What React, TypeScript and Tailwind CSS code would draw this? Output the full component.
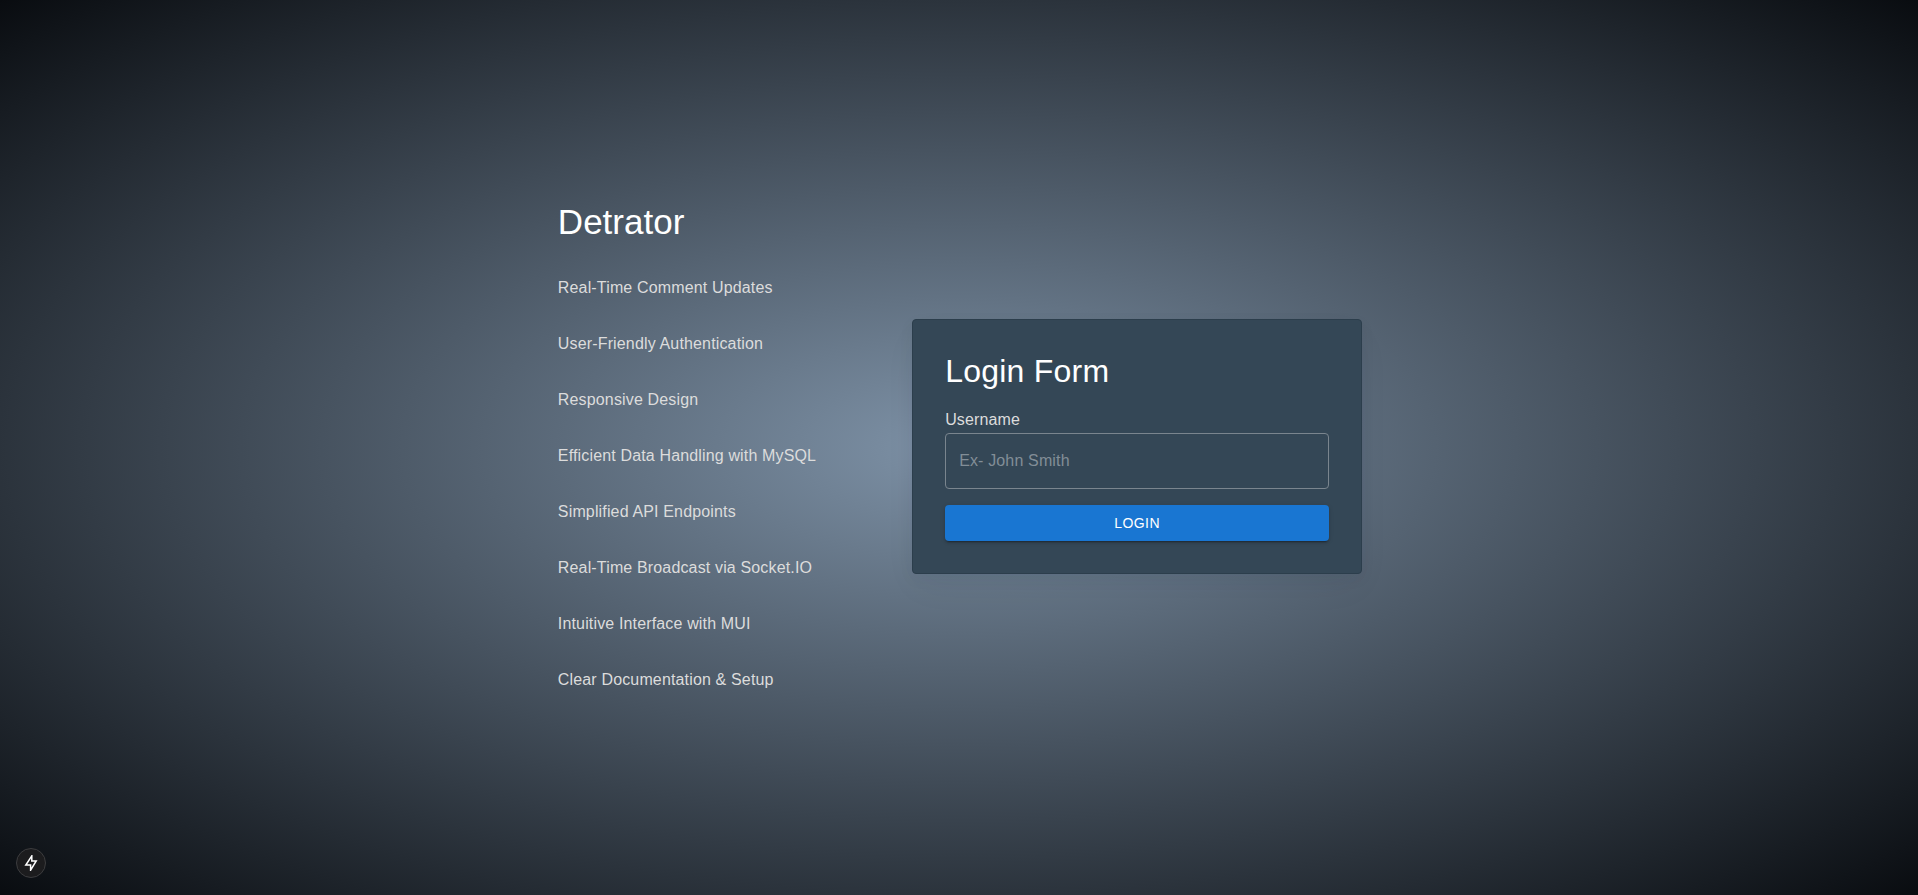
const features = [
  "Real-Time Comment Updates",
  "User-Friendly Authentication",
  "Responsive Design",
  "Efficient Data Handling with MySQL",
  "Simplified API Endpoints",
  "Real-Time Broadcast via Socket.IO",
  "Intuitive Interface with MUI",
  "Clear Documentation & Setup",
];

function FeatureList() {
  return (
    <section className="flex flex-col gap-8">
      <h1 className="mb-0.5 text-[35px] leading-10 text-white">Detrator</h1>
      <ul className="flex flex-col gap-8">
        {features.map((feature) => (
          <li key={feature} className="text-base leading-6 tracking-[0.00938em] text-[#dcdcdc]">
            {feature}
          </li>
        ))}
      </ul>
    </section>
  );
}

function LoginForm() {
  return (
    <form
      className="flex w-[450px] flex-col rounded border border-[#2c3e4c] bg-[#344756] p-8 shadow-[0_5px_15px_rgba(20,30,50,0.05),0_15px_35px_-5px_rgba(20,30,50,0.05)]"
      onSubmit={(event) => event.preventDefault()}
    >
      <h2 className="text-[32px] leading-[38px] tracking-[0.00735em] text-white">Login Form</h2>
      <label htmlFor="username" className="mt-4 text-base leading-[27px] tracking-[0.00938em] text-[#dcdcdc]">
        Username
      </label>
      <input
        id="username"
        type="text"
        placeholder="Ex- John Smith"
        className="h-14 w-full rounded border border-[#7a858e] bg-transparent px-[13px] text-base tracking-[0.00938em] text-white outline-none placeholder:text-[#828e97]"
      />
      <button
        type="submit"
        className="mt-4 h-9 rounded bg-[#1976d2] text-sm leading-6 tracking-[0.02857em] text-white uppercase shadow-[0_3px_1px_-2px_rgba(0,0,0,0.2),0_2px_2px_0_rgba(0,0,0,0.14),0_1px_5px_0_rgba(0,0,0,0.12)]"
      >
        Login
      </button>
    </form>
  );
}

export default function App() {
  return (
    <div className="flex min-h-screen items-center justify-center bg-[radial-gradient(ellipse_at_center,#7e92a7,#090c10)] pb-0.5 pl-0.5 font-['Liberation_Sans',Arial,sans-serif]">
      <main className="flex items-center gap-24">
        <FeatureList />
        <LoginForm />
      </main>
      <button
        type="button"
        aria-label="Static route"
        className="fixed bottom-[17px] left-4 flex size-[30px] items-center justify-center rounded-full border border-[#3d3d3f] bg-[#1c1c1e] text-white"
      >
        <svg viewBox="0 0 16 16" className="size-4" fill="none" stroke="currentColor" strokeWidth="1.5" aria-hidden="true">
          <path d="M8.8 0.8 2.8 10h4.8v5.2L13.2 6H8.8Z" />
        </svg>
      </button>
    </div>
  );
}
